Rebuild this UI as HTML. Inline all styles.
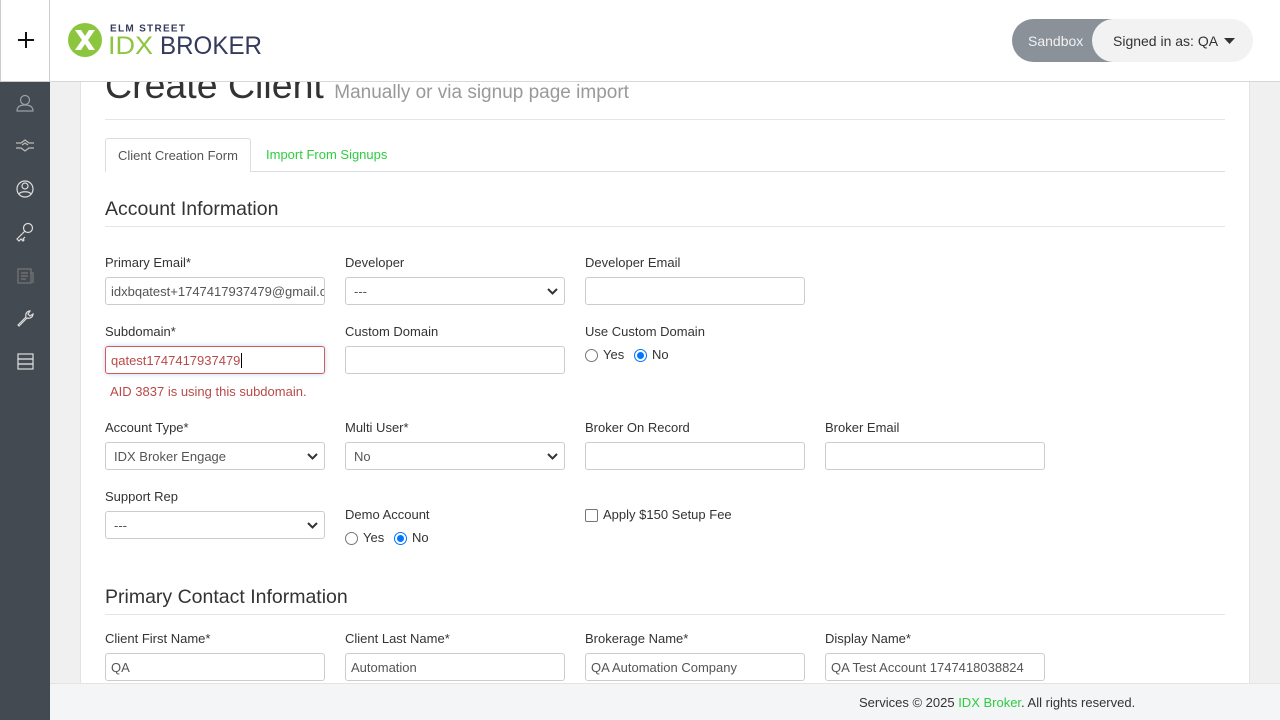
<!DOCTYPE html>
<html><head><meta charset="utf-8"><style>
*{box-sizing:border-box;margin:0;padding:0}
body{width:1280px;height:720px;overflow:hidden;background:#f0f0f0;font-family:"Liberation Sans",sans-serif;color:#333;position:relative}
.a{position:absolute}
.hdr{left:0;top:0;width:1280px;height:82px;background:#fff;border-bottom:1px solid #d8d8d8}
.plus{left:0;top:0;width:50px;height:82px;border:1px solid #ccc;border-top:none}
.side{left:0;top:82px;width:50px;height:638px;background:#434a52}
.panel{left:80px;top:82px;width:1170px;height:602px;background:#fff;border-left:1px solid #e3e3e3;border-right:1px solid #e3e3e3}
.lbl{font-size:13px;color:#333}
.in{width:220px;height:28px;border:1px solid #ccc;border-radius:3px;background:#fff;font-size:13px;padding:6px 5px;color:#555;white-space:nowrap;overflow:hidden}
.sel{padding-left:8px}
.sel svg{position:absolute;right:6px;top:10px}
.hl{height:1px;background:#e5e5e5}
h2{font-weight:normal;font-size:19.5px;color:#333}
.rad{width:13px;height:13px;border:1px solid #767676;border-radius:50%;background:#fff}
.rad.on{border:1px solid #0075ff;}
.rad.on::after{content:"";position:absolute;left:2px;top:2px;width:7px;height:7px;border-radius:50%;background:#0075ff}
.foot{left:50px;top:683px;width:1230px;height:37px;background:#f4f5f7;border-top:1px solid #e3e3e3;font-size:13px;color:#333}
</style></head><body>
<div class="a panel"></div>
<div class="a" style="left:105px;top:57px;font-size:37.5px;color:#333;line-height:56px;white-space:nowrap">Create Client <span style="font-size:19px;color:#999">Manually or via signup page import</span></div>
<div class="a hdr"></div>
<div class="a plus"><svg class="a" style="left:16px;top:31px" width="18" height="18"><path d="M9 1v16M1 9h16" stroke="#111" stroke-width="2"/></svg></div>
<svg class="a" style="left:68px;top:22px" width="200" height="38">
<circle cx="17" cy="18" r="17" fill="#8cc63f"/>
<path d="M7 8l6 0 4 6 4-6 6 0-7 10 7 10-6 0-4-6-4 6-6 0 7-10z" fill="#fff"/>
<text x="42" y="9.5" font-family="Liberation Sans" font-size="10" font-weight="bold" fill="#333a5c" textLength="75" lengthAdjust="spacing">ELM STREET</text>
<text x="40" y="32" font-family="Liberation Sans" font-size="25" fill="#8cc63f" textLength="45" lengthAdjust="spacingAndGlyphs">IDX</text>
<text x="92" y="32" font-family="Liberation Sans" font-size="25" fill="#333a5c" textLength="102" lengthAdjust="spacingAndGlyphs">BROKER</text>
</svg>
<div class="a" style="left:1012px;top:19px;width:120px;height:43px;border-radius:22px;background:#8a9199"></div>
<div class="a" style="left:1028px;top:33px;font-size:14px;color:#f2f2f2">Sandbox</div>
<div class="a" style="left:1092px;top:19px;width:161px;height:43px;border-radius:22px;background:#f2f2f2"></div>
<div class="a" style="left:1113px;top:33px;font-size:14px;color:#333">Signed in as: QA</div>
<svg class="a" style="left:1224px;top:38px" width="11" height="6"><path d="M0 0h11L5.5 6z" fill="#333"/></svg>
<div class="a side"></div>
<svg class="a" style="left:14px;top:92px" width="22" height="290" fill="none" stroke="#9aa0a7" stroke-width="1.2">
<circle cx="11" cy="8" r="4.5"/><path d="M3 19c0-5 4-6 8-6s8 1 8 6z"/>
<path d="M2 51h5l4-3 4 3h5M2 56h5l4 3 4-3h5M8 53l3-2 3 2" stroke="#bbb"/>
<circle cx="11" cy="97" r="8" stroke="#ddd"/><circle cx="11" cy="94" r="3" stroke="#ddd"/><path d="M5 102c2-3 10-3 12 0" stroke="#ddd"/>
<circle cx="14" cy="136" r="4.5" stroke="#ddd"/><path d="M11 139l-8 8 2 2 2-2 2 2 1-1-1-1 2-2" stroke="#ddd"/>
<rect x="4" y="177" width="13" height="14" stroke="#777"/><path d="M7 181h7M7 184h7M7 187h5M17 181h2v10" stroke="#777"/>
<path d="M4 233l8-8c-1-3 1-6 4-6l-2 3 2 2 3-2c0 3-3 5-6 4l-8 8z" stroke="#ddd"/>
<rect x="4" y="262" width="15" height="5" stroke="#ddd"/><rect x="4" y="267" width="15" height="5" stroke="#ddd"/><rect x="4" y="272" width="15" height="5" stroke="#ddd"/>
</svg>
<div class="a hl" style="left:105px;top:119px;width:1120px"></div>
<div class="a hl" style="left:105px;top:171px;width:1120px;background:#ddd"></div>
<div class="a" style="left:105px;top:138px;width:146px;height:34px;background:#fff;border:1px solid #ddd;border-bottom:none;border-radius:3px 3px 0 0;font-size:13px;color:#555;padding:9px 12px">Client Creation Form</div>
<div class="a" style="left:266px;top:147px;font-size:13px;color:#2ecc40">Import From Signups</div>
<h2 class="a" style="left:105px;top:198px">Account Information</h2>
<div class="a hl" style="left:105px;top:226px;width:1120px"></div>

<div class="a lbl" style="left:105px;top:255px">Primary Email*</div>
<div class="a in" style="left:105px;top:277px">idxbqatest+1747417937479@gmail.c</div>
<div class="a lbl" style="left:345px;top:255px">Developer</div>
<div class="a in sel" style="left:345px;top:277px">---<svg width="11" height="8"><path d="M1 1l4.5 4.5L10 1" stroke="#333" stroke-width="2" fill="none"/></svg></div>
<div class="a lbl" style="left:585px;top:255px">Developer Email</div>
<div class="a in" style="left:585px;top:277px"></div>

<div class="a lbl" style="left:105px;top:324px">Subdomain*</div>
<div class="a in" style="left:105px;top:346px;border-color:#e0575a;color:#b94a48;box-shadow:0 0 4px rgba(102,175,233,.5)">qatest1747417937479<span style="border-left:1px solid #000;margin-left:1px"></span></div>
<div class="a" style="left:110px;top:384px;font-size:13px;color:#b94a48">AID 3837 is using this subdomain.</div>
<div class="a lbl" style="left:345px;top:324px">Custom Domain</div>
<div class="a in" style="left:345px;top:346px"></div>
<div class="a lbl" style="left:585px;top:324px">Use Custom Domain</div>
<div class="a rad" style="left:585px;top:349px"></div><div class="a lbl" style="left:603px;top:347px">Yes</div>
<div class="a rad on" style="left:634px;top:349px"></div><div class="a lbl" style="left:652px;top:347px">No</div>

<div class="a lbl" style="left:105px;top:420px">Account Type*</div>
<div class="a in sel" style="left:105px;top:442px">IDX Broker Engage<svg width="11" height="8"><path d="M1 1l4.5 4.5L10 1" stroke="#333" stroke-width="2" fill="none"/></svg></div>
<div class="a lbl" style="left:345px;top:420px">Multi User*</div>
<div class="a in sel" style="left:345px;top:442px">No<svg width="11" height="8"><path d="M1 1l4.5 4.5L10 1" stroke="#333" stroke-width="2" fill="none"/></svg></div>
<div class="a lbl" style="left:585px;top:420px">Broker On Record</div>
<div class="a in" style="left:585px;top:442px"></div>
<div class="a lbl" style="left:825px;top:420px">Broker Email</div>
<div class="a in" style="left:825px;top:442px"></div>

<div class="a lbl" style="left:105px;top:489px">Support Rep</div>
<div class="a in sel" style="left:105px;top:511px">---<svg width="11" height="8"><path d="M1 1l4.5 4.5L10 1" stroke="#333" stroke-width="2" fill="none"/></svg></div>
<div class="a lbl" style="left:345px;top:507px">Demo Account</div>
<div class="a rad" style="left:345px;top:532px"></div><div class="a lbl" style="left:363px;top:530px">Yes</div>
<div class="a rad on" style="left:394px;top:532px"></div><div class="a lbl" style="left:412px;top:530px">No</div>
<div class="a" style="left:585px;top:509px;width:13px;height:13px;border:1px solid #767676;border-radius:2px;background:#fff"></div>
<div class="a lbl" style="left:603px;top:507px">Apply $150 Setup Fee</div>

<h2 class="a" style="left:105px;top:586px">Primary Contact Information</h2>
<div class="a hl" style="left:105px;top:614px;width:1120px"></div>
<div class="a lbl" style="left:105px;top:631px">Client First Name*</div>
<div class="a in" style="left:105px;top:653px">QA</div>
<div class="a lbl" style="left:345px;top:631px">Client Last Name*</div>
<div class="a in" style="left:345px;top:653px">Automation</div>
<div class="a lbl" style="left:585px;top:631px">Brokerage Name*</div>
<div class="a in" style="left:585px;top:653px">QA Automation Company</div>
<div class="a lbl" style="left:825px;top:631px">Display Name*</div>
<div class="a in" style="left:825px;top:653px">QA Test Account 1747418038824</div>

<div class="a foot"><span class="a" style="left:809px;top:11px;white-space:nowrap">Services © 2025 <span style="color:#2ecc40">IDX Broker</span>. All rights reserved.</span></div>
</body></html>
